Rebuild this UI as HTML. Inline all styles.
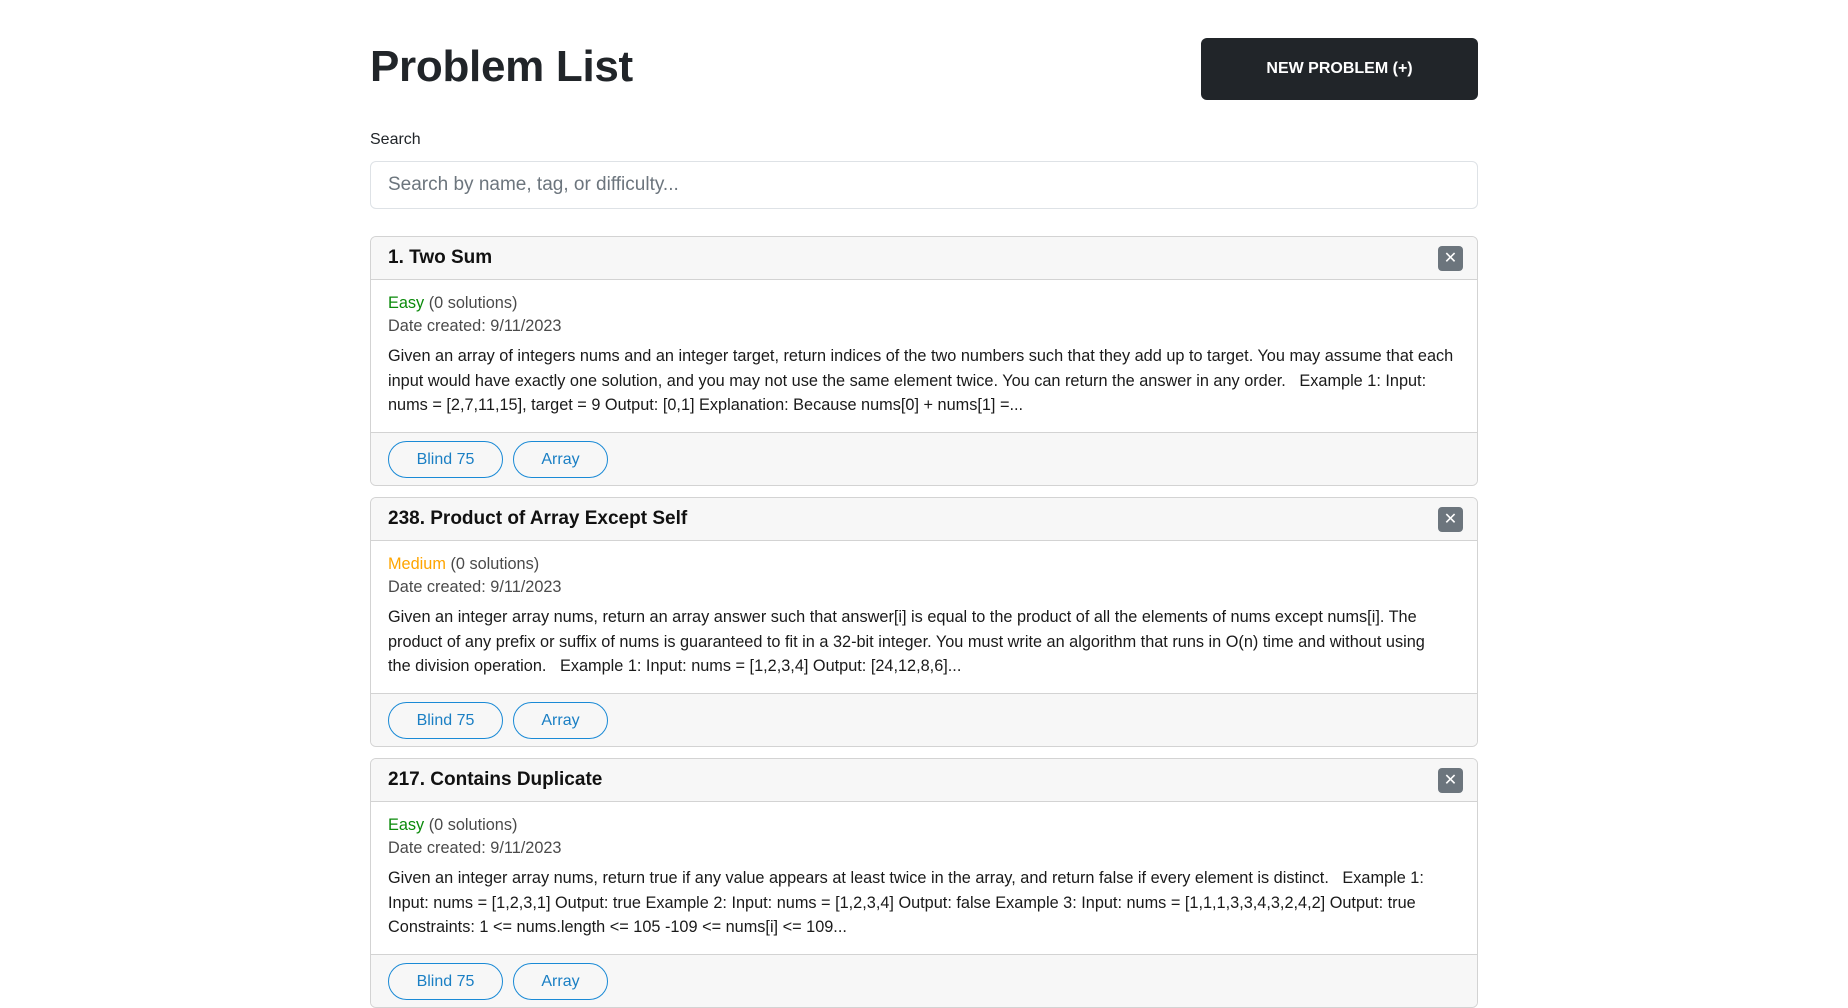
<!DOCTYPE html>
<html><head><meta charset="utf-8"><style>
*{box-sizing:border-box;margin:0;padding:0}
body{width:1848px;height:967px;overflow:hidden;background:#fff;font-family:"Liberation Sans",sans-serif;color:#212529;position:relative}
h1{position:absolute;left:370px;top:42px;font-size:44px;font-weight:bold;letter-spacing:-0.3px;color:#212529}
.btn{position:absolute;left:1201px;top:38px;width:277px;height:62px;background:#212529;border-radius:6px;color:#fff;font-weight:bold;font-size:16px;display:flex;align-items:center;justify-content:center}
.lbl{position:absolute;left:370px;top:131px;font-size:16px}
.inp{position:absolute;left:370px;top:161px;width:1108px;height:48px;border:1px solid #dee2e6;border-radius:6px;padding-left:17px;line-height:46px;font-size:19px;color:#6c757d}
.card{position:absolute;left:370px;width:1108px;height:250px;border:1px solid #d3d3d3;border-radius:6px;overflow:hidden}
.hd{height:43px;background:#f7f7f7;border-bottom:1px solid #d3d3d3;padding-left:17px;font-size:19px;font-weight:bold;line-height:42px;position:relative;color:#111}
.x{position:absolute;right:14px;top:9px;width:25px;height:25px;background:#6c757d;border-radius:4px;color:#fff;font-size:16px;line-height:25px;text-align:center;font-weight:normal}
.bd{height:152px;padding:12px 17px 0;font-size:16.3px}
.m{color:#4a4a4a;line-height:23px}
.d{margin-top:6px;line-height:24.5px;color:#1a1a1a}
.d div{white-space:nowrap}
.ft{height:55px;background:#f7f7f7;border-top:1px solid #d3d3d3;padding:8px 0 0 17px}
.tag{display:inline-block;height:37px;border:1px solid #1a8ad6;border-radius:19px;color:#1a7fc4;font-size:16px;line-height:35px;text-align:center;margin-right:10px}
.e{color:#0a8a0a}.o{color:#ffa500}
</style></head><body>
<h1>Problem List</h1>
<div class="btn">NEW PROBLEM (+)</div>
<div class="lbl">Search</div>
<div class="inp">Search by name, tag, or difficulty...</div>

<div class="card" style="top:236px">
<div class="hd">1. Two Sum<div class="x">✕</div></div>
<div class="bd"><div class="m"><span class="e">Easy</span> (0 solutions)</div><div class="m">Date created: 9/11/2023</div>
<div class="d"><div>Given an array of integers nums and an integer target, return indices of the two numbers such that they add up to target. You may assume that each</div><div>input would have exactly one solution, and you may not use the same element twice. You can return the answer in any order. &nbsp; Example 1: Input:</div><div>nums = [2,7,11,15], target = 9 Output: [0,1] Explanation: Because nums[0] + nums[1] =...</div></div></div>
<div class="ft"><span class="tag" style="width:115px">Blind 75</span><span class="tag" style="width:95px">Array</span></div>
</div>

<div class="card" style="top:497px">
<div class="hd">238. Product of Array Except Self<div class="x">✕</div></div>
<div class="bd"><div class="m"><span class="o">Medium</span> (0 solutions)</div><div class="m">Date created: 9/11/2023</div>
<div class="d"><div>Given an integer array nums, return an array answer such that answer[i] is equal to the product of all the elements of nums except nums[i]. The</div><div>product of any prefix or suffix of nums is guaranteed to fit in a 32-bit integer. You must write an algorithm that runs in O(n) time and without using</div><div>the division operation. &nbsp; Example 1: Input: nums = [1,2,3,4] Output: [24,12,8,6]...</div></div></div>
<div class="ft"><span class="tag" style="width:115px">Blind 75</span><span class="tag" style="width:95px">Array</span></div>
</div>

<div class="card" style="top:758px">
<div class="hd">217. Contains Duplicate<div class="x">✕</div></div>
<div class="bd"><div class="m"><span class="e">Easy</span> (0 solutions)</div><div class="m">Date created: 9/11/2023</div>
<div class="d"><div>Given an integer array nums, return true if any value appears at least twice in the array, and return false if every element is distinct. &nbsp; Example 1:</div><div>Input: nums = [1,2,3,1] Output: true Example 2: Input: nums = [1,2,3,4] Output: false Example 3: Input: nums = [1,1,1,3,3,4,3,2,4,2] Output: true</div><div>Constraints: 1 &lt;= nums.length &lt;= 105 -109 &lt;= nums[i] &lt;= 109...</div></div></div>
<div class="ft"><span class="tag" style="width:115px">Blind 75</span><span class="tag" style="width:95px">Array</span></div>
</div>
</body></html>
